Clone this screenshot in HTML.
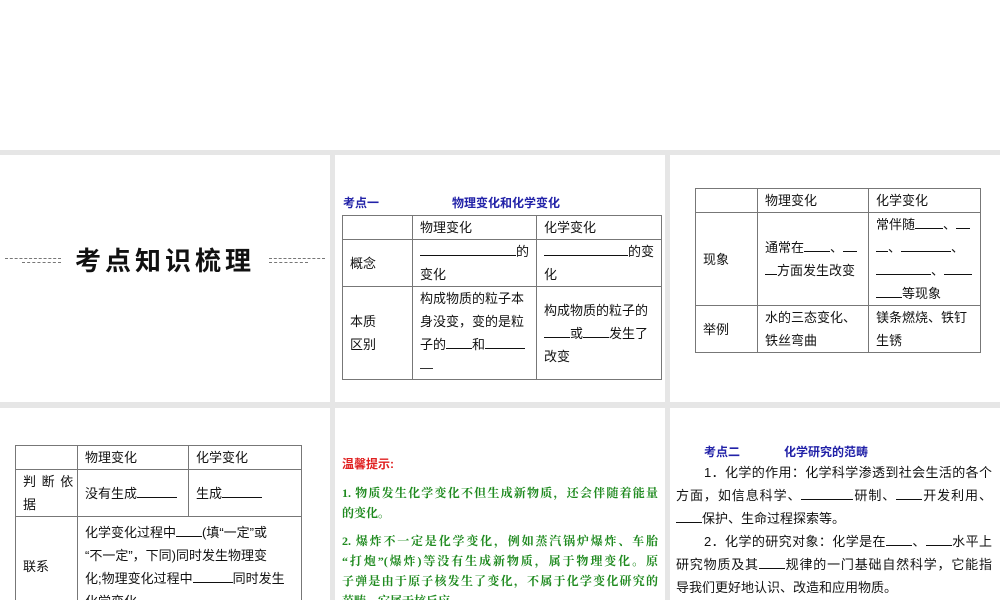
<!DOCTYPE html>
<html><head><meta charset="utf-8"><style>
*{margin:0;padding:0;box-sizing:border-box}
body{width:1000px;height:600px;position:relative;overflow:hidden;background:#fff;font-family:"Liberation Sans","Noto Sans CJK SC",sans-serif;color:#111}
.gray{position:absolute;left:0;top:150px;width:1000px;height:450px;background:#e6e6e6}
.p{position:absolute;background:#fff;overflow:hidden}
.a{position:absolute;white-space:nowrap}
table{position:absolute;border-collapse:collapse;font-size:13px;line-height:23px}
td{border:1px solid #777;vertical-align:middle;padding:0 7px}
.blue{color:#2222a8;font-weight:bold;font-size:12px}
.g{color:#1f8a1f;font-weight:bold;font-size:12px;font-family:"Liberation Serif","Noto Serif CJK SC",serif}
.j{text-align:justify;text-align-last:justify}
u{text-decoration:none;border-bottom:1px solid #111;display:inline-block;line-height:14px}
</style></head><body>
<div class="gray"></div>
<!-- panel 1 -->
<div class="p" style="left:0;top:155px;width:330px;height:247px">
 <div class="a" style="left:5px;top:103px;width:56px;border-top:1px dashed #777"></div>
 <div class="a" style="left:22px;top:107px;width:39px;border-top:1px dashed #777"></div>
 <div class="a" style="left:75px;top:86px;font-size:26px;font-weight:bold;letter-spacing:4px;color:#111">考点知识梳理</div>
 <div class="a" style="left:269px;top:103px;width:56px;border-top:1px dashed #777"></div>
 <div class="a" style="left:269px;top:107px;width:39px;border-top:1px dashed #777"></div>
</div>
<!-- panel 2 -->
<div class="p" style="left:335px;top:155px;width:330px;height:247px">
 <div class="a blue" style="left:8px;top:39px">考点一</div>
 <div class="a blue" style="left:117px;top:39px">物理变化和化学变化</div>
 <table style="left:7px;top:60px;width:320px">
  <tr style="height:23px"><td style="width:70px"></td><td style="width:124px">物理变化</td><td>化学变化</td></tr>
  <tr style="height:46px"><td>概念</td><td><u style="width:96px"></u>的<br>变化</td><td><u style="width:84px"></u>的变<br>化</td></tr>
  <tr style="height:91px"><td>本质<br>区别</td><td>构成物质的粒子本<br>身没变，变的是粒<br>子的<u style="width:26px"></u>和<u style="width:40px"></u><br>—</td><td>构成物质的粒子的<br><u style="width:26px"></u>或<u style="width:26px"></u>发生了<br>改变</td></tr>
 </table>
</div>
<!-- panel 3 -->
<div class="p" style="left:670px;top:155px;width:330px;height:247px">
 <table style="left:25px;top:33px;width:286px">
  <tr style="height:24px"><td style="width:62px"></td><td style="width:111px">物理变化</td><td>化学变化</td></tr>
  <tr style="height:91px"><td>现象</td><td>通常在<u style="width:26px"></u>、<u style="width:14px"></u><br><u style="width:12px"></u>方面发生改变</td><td>常伴随<u style="width:28px"></u>、<u style="width:14px"></u><br><u style="width:12px"></u>、<u style="width:50px"></u>、<br><u style="width:55px"></u>、<u style="width:28px"></u><br><u style="width:26px"></u>等现象</td></tr>
  <tr style="height:46px"><td>举例</td><td>水的三态变化、<br>铁丝弯曲</td><td>镁条燃烧、铁钉<br>生锈</td></tr>
 </table>
</div>
<!-- panel 4 -->
<div class="p" style="left:0;top:408px;width:330px;height:192px">
 <table style="left:15px;top:37px;width:286px;table-layout:fixed">
  <colgroup><col style="width:62px"><col style="width:111px"><col style="width:113px"></colgroup>
  <tr style="height:23px"><td></td><td>物理变化</td><td>化学变化</td></tr>
  <tr style="height:46px"><td style="padding:0 4px 0 7px;white-space:nowrap;overflow:hidden"><span style="letter-spacing:1px">判 断 依</span><br>据</td><td>没有生成<u style="width:40px"></u></td><td>生成<u style="width:40px"></u></td></tr>
  <tr style="height:100px"><td>联系</td><td colspan="2">化学变化过程中<u style="width:26px"></u>(填“一定”或<br>“不一定”，下同)同时发生物理变<br>化;物理变化过程中<u style="width:40px"></u>同时发生<br>化学变化</td></tr>
 </table>
</div>
<!-- panel 5 -->
<div class="p" style="left:335px;top:408px;width:330px;height:192px">
 <div class="a" style="left:7px;top:47px;color:#e02020;font-size:12px;font-weight:bold">温馨提示:</div>
 <div class="a g" style="left:7px;top:75px;width:316px;line-height:20px;white-space:normal">
  <div class="j">1. 物质发生化学变化不但生成新物质，还会伴随着能量</div>
  <div>的变化。</div>
  <div class="j" style="margin-top:8px">2. 爆炸不一定是化学变化，例如蒸汽锅炉爆炸、车胎</div>
  <div class="j">“打炮”(爆炸)等没有生成新物质，属于物理变化。原</div>
  <div class="j">子弹是由于原子核发生了变化，不属于化学变化研究的</div>
  <div>范畴，它属于核反应。</div>
 </div>
</div>
<!-- panel 6 -->
<div class="p" style="left:670px;top:408px;width:330px;height:192px">
 <div class="a blue" style="left:34px;top:35px">考点二</div>
 <div class="a blue" style="left:114px;top:35px">化学研究的范畴</div>
 <div class="a" style="left:6px;top:53px;width:316px;font-size:13px;line-height:23px;white-space:normal">
  <div class="j" style="padding-left:28px">1．化学的作用：化学科学渗透到社会生活的各个</div>
  <div class="j">方面，如信息科学、<u style="width:52px"></u>研制、<u style="width:26px"></u>开发利用、</div>
  <div><u style="width:26px"></u>保护、生命过程探索等。</div>
  <div class="j" style="padding-left:28px">2．化学的研究对象：化学是在<u style="width:26px"></u>、<u style="width:26px"></u>水平上</div>
  <div class="j">研究物质及其<u style="width:26px"></u>规律的一门基础自然科学，它能指</div>
  <div>导我们更好地认识、改造和应用物质。</div>
 </div>
</div>
</body></html>
